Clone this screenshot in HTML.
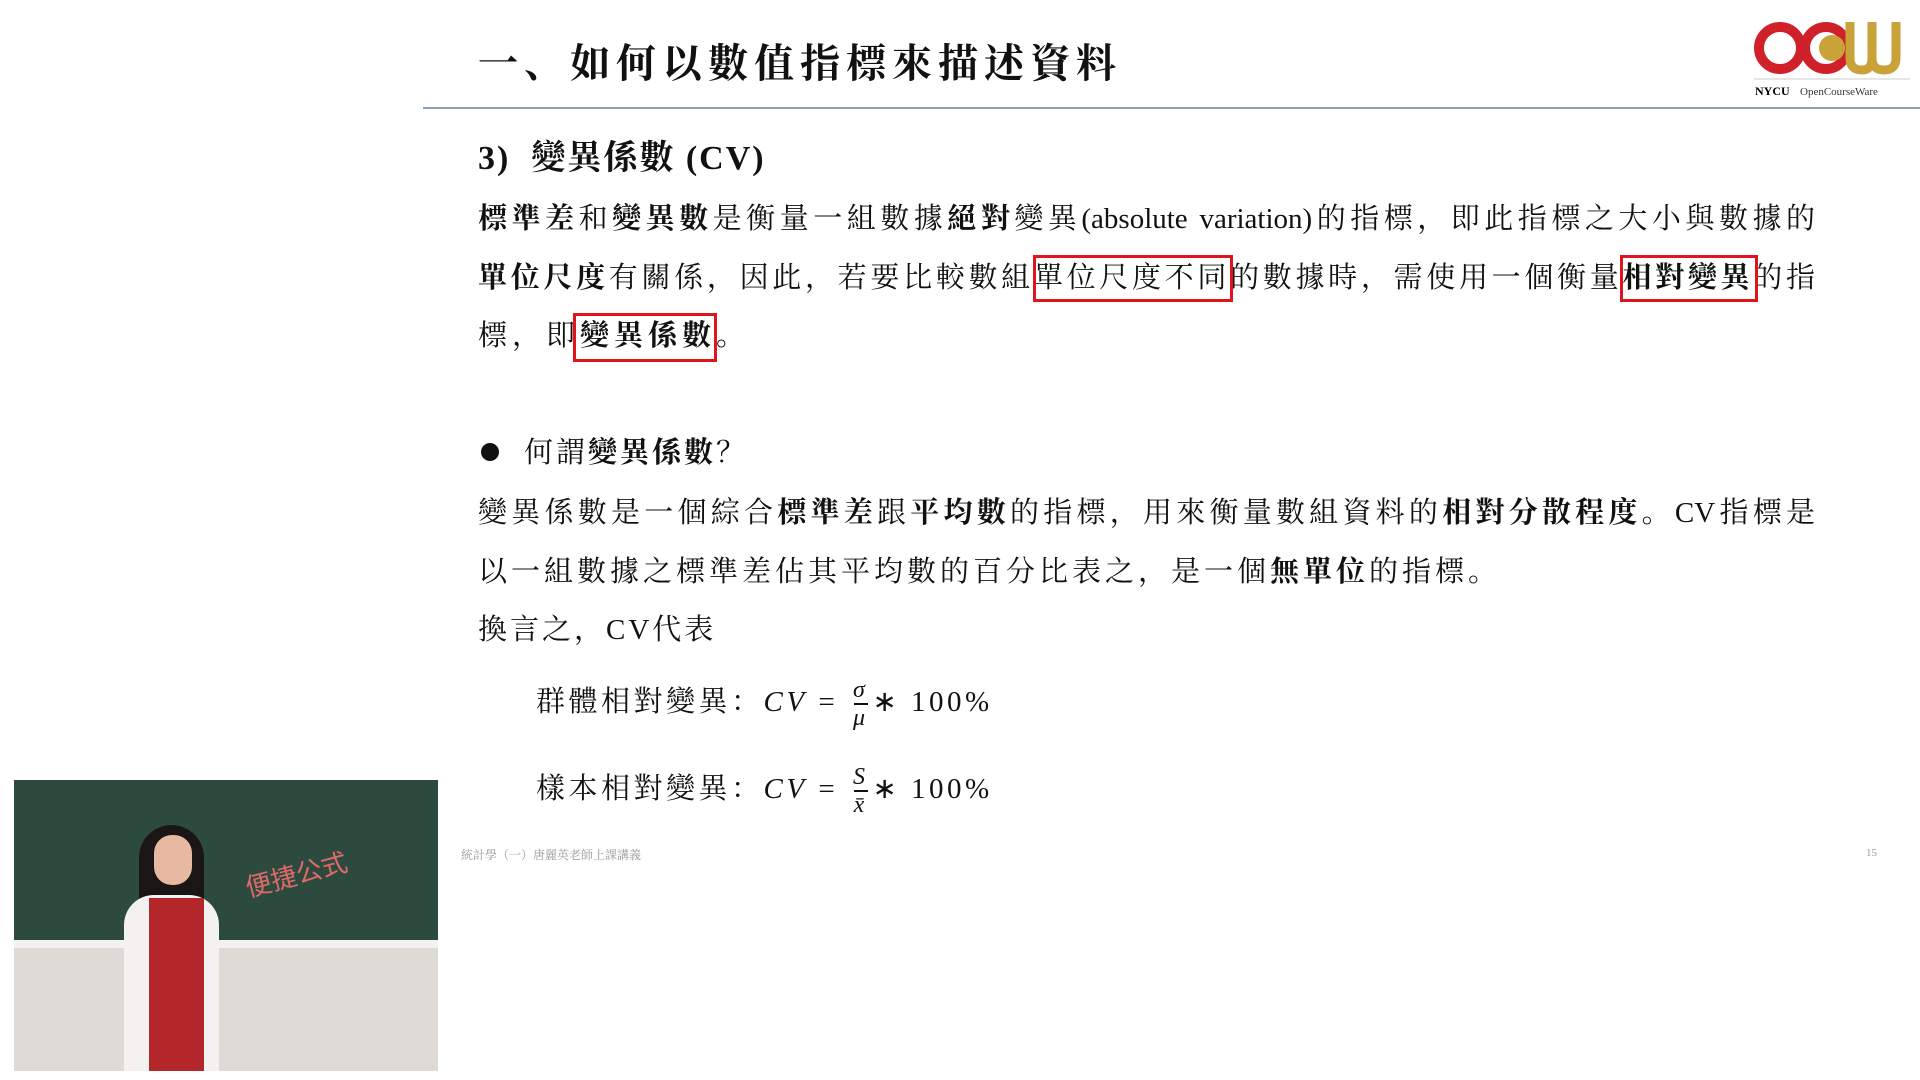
<!DOCTYPE html>
<html><head><meta charset="utf-8"><style>
body{margin:0;width:1920px;height:1080px;background:#fff;position:relative;overflow:hidden;font-family:"Liberation Serif","Noto Serif CJK SC",serif;color:#111}
.a{position:absolute;white-space:nowrap}
.l{position:absolute;left:478px;width:1337px;font-size:29px;text-align:justify;text-align-last:justify;white-space:nowrap;line-height:40px}
b{font-weight:bold}
.box{position:absolute;border:3px solid #e0141c}
.frac{display:inline-block;vertical-align:middle;text-align:center;font-style:italic;font-size:24px;line-height:26px;margin:0 4px}
.frac span{display:block;border-top:2px solid #111;width:14px;margin:0 auto;height:0}
</style></head><body>
<div class="a" style="left:478px;top:32px;font-size:40px;font-weight:bold;letter-spacing:6px">一、如何以數值指標來描述資料</div>
<div class="a" style="left:423px;top:107px;width:1497px;height:2px;background:#8aa0b4"></div>
<svg class="a" style="left:1754px;top:18px" width="156" height="82" viewBox="0 0 156 82">
<circle cx="26" cy="30" r="21" fill="none" stroke="#d0202a" stroke-width="10"/>
<circle cx="72" cy="30" r="21" fill="none" stroke="#d0202a" stroke-width="10"/>
<circle cx="78" cy="30" r="13" fill="#c9a23a"/>
<path d="M96 4 V40 Q96 52 108 52 Q118 52 118 40 V4 M118 40 Q118 52 130 52 Q142 52 142 40 V4" fill="none" stroke="#c9a23a" stroke-width="9"/>
<line x1="0" y1="61" x2="156" y2="61" stroke="#ccc"/>
<text x="1" y="77" font-size="12" font-weight="bold" font-family="Liberation Serif">NYCU</text>
<text x="46" y="77" font-size="11" fill="#333" font-family="Liberation Serif">OpenCourseWare</text>
</svg>
<div class="a" style="left:478px;top:130px;font-size:34px;font-weight:bold;letter-spacing:2px">3)&nbsp; 變異係數 (CV)</div>
<div class="l" style="top:199px"><b>標準差</b>和<b>變異數</b>是衡量一組數據<b>絕對</b>變異(absolute variation)的指標，即此指標之大小與數據的</div>
<div class="l" style="top:258px"><b>單位尺度</b>有關係，因此，若要比較數組單位尺度不同的數據時，需使用一個衡量<b>相對變異</b>的指</div>
<div class="a" style="left:478px;top:316px;font-size:29px;line-height:40px;letter-spacing:5px">標，即<b>變異係數</b>。</div>
<div class="box" style="left:1033px;top:255px;width:194px;height:41px"></div>
<div class="box" style="left:1620px;top:255px;width:132px;height:41px"></div>
<div class="box" style="left:573px;top:313px;width:138px;height:43px"></div>
<div class="a" style="left:481px;top:443px;width:18px;height:18px;border-radius:50%;background:#111"></div>
<div class="a" style="left:524px;top:433px;font-size:29px;line-height:40px;letter-spacing:3px">何謂<b>變異係數</b>？</div>
<div class="l" style="top:493px">變異係數是一個綜合<b>標準差</b>跟<b>平均數</b>的指標，用來衡量數組資料的<b>相對分散程度</b>。CV指標是</div>
<div class="a" style="left:478px;top:552px;font-size:29px;line-height:40px;letter-spacing:4px">以一組數據之標準差佔其平均數的百分比表之，是一個<b>無單位</b>的指標。</div>
<div class="a" style="left:478px;top:610px;font-size:29px;line-height:40px;letter-spacing:3px">換言之，CV代表</div>
<div class="a" style="left:536px;top:675px;font-size:29px;line-height:54px;letter-spacing:3.5px">群體相對變異：<i>CV</i> = <span class="frac">σ<span></span>μ</span>∗ 100%</div>
<div class="a" style="left:536px;top:762px;font-size:29px;line-height:54px;letter-spacing:3.5px">樣本相對變異：<i>CV</i> = <span class="frac">S<span></span>x̄</span>∗ 100%</div>
<div class="a" style="left:461px;top:846px;font-size:12px;color:#999">統計學（一）唐麗英老師上課講義</div>
<div class="a" style="left:1866px;top:847px;font-size:11px;color:#999">15</div>
<div class="a" style="left:14px;top:780px;width:424px;height:291px;background:#e6e3e0;overflow:hidden">
 <div class="a" style="left:0;top:0;width:425px;height:160px;background:#2d4a3e"></div>
 <div class="a" style="left:0;top:160px;width:425px;height:8px;background:#f2f2f2"></div>
 <div class="a" style="left:0;top:168px;width:425px;height:123px;background:#dedad6"></div>
 <div class="a" style="left:125px;top:45px;width:65px;height:80px;border-radius:40px 40px 10px 10px;background:#1b1616"></div>
 <div class="a" style="left:140px;top:55px;width:38px;height:50px;border-radius:18px;background:#e8b9a2"></div>
 <div class="a" style="left:110px;top:115px;width:95px;height:180px;border-radius:30px 30px 0 0;background:#f4f2f0"></div>
 <div class="a" style="left:135px;top:118px;width:55px;height:180px;background:#b3272b"></div>
 <div class="a" style="left:230px;top:75px;font-size:26px;color:#e06a6a;font-family:'Noto Sans CJK SC',sans-serif;transform:rotate(-15deg)">便捷公式</div>
</div>
</body></html>
